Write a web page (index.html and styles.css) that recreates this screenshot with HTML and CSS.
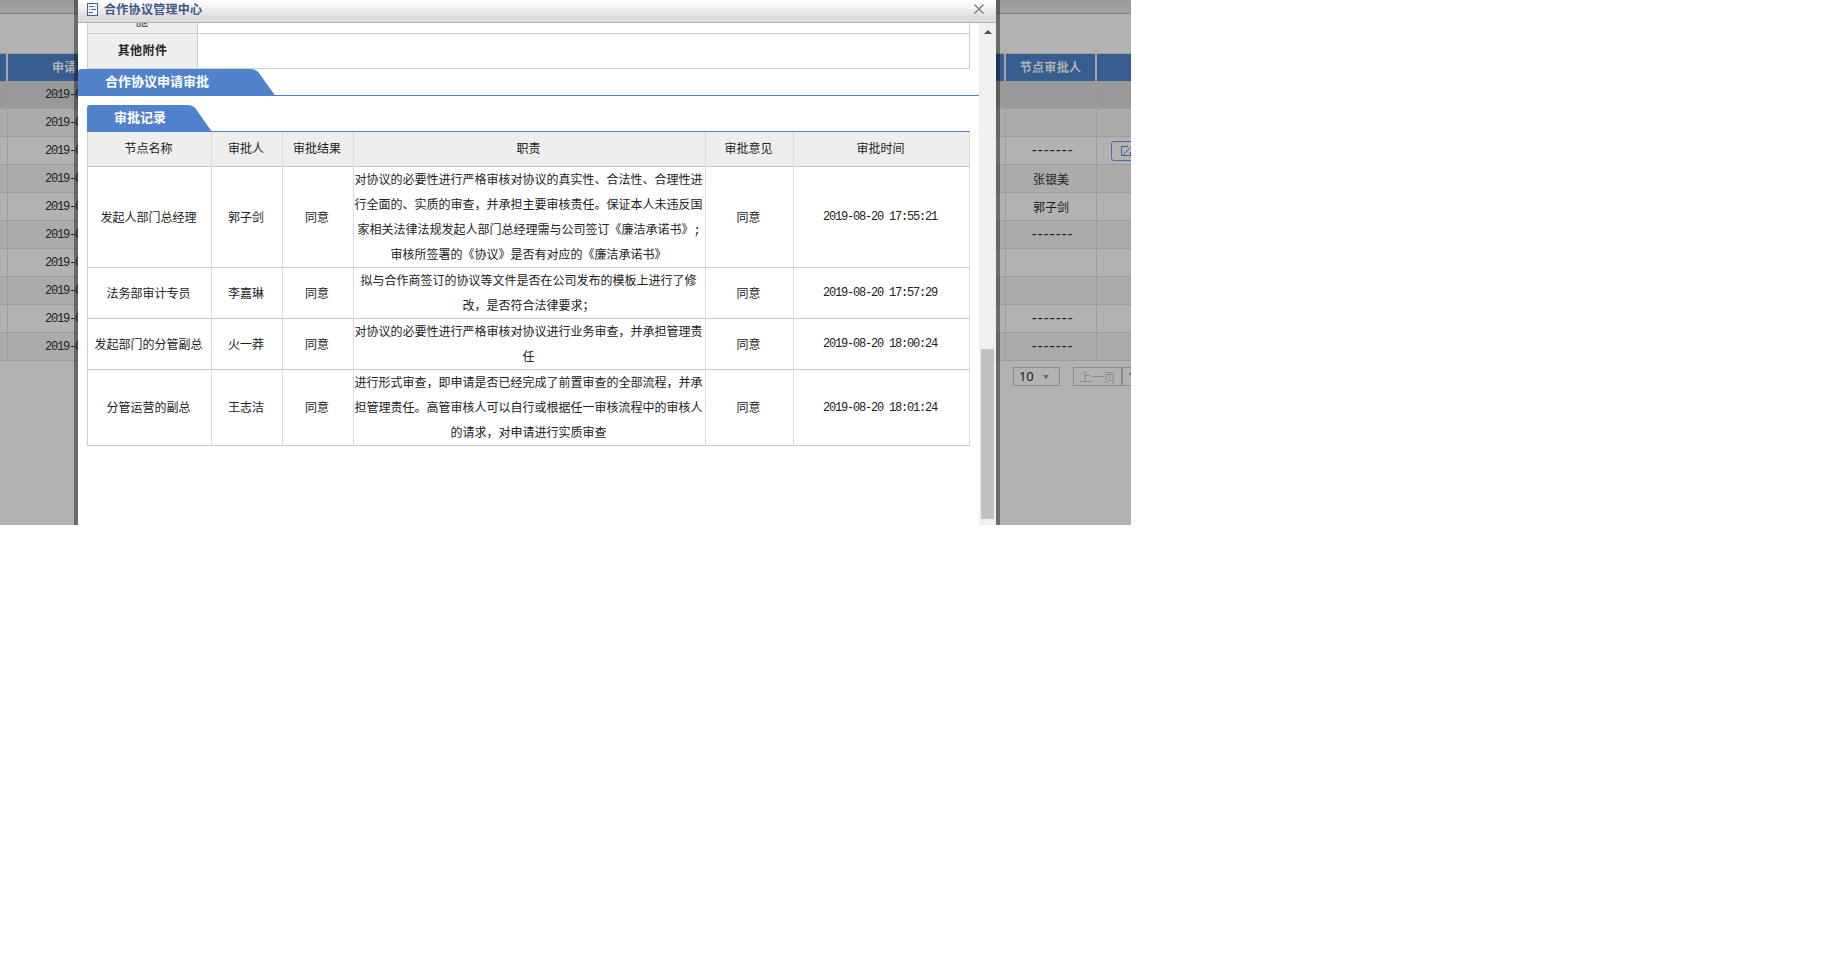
FILE: index.html
```
<!DOCTYPE html>
<html lang="zh-CN">
<head>
<meta charset="utf-8">
<title>合作协议管理中心</title>
<link rel="stylesheet" href="styles.css">
</head>
<body>
<div class="screen">
  <div class="backdrop">
    <div class="back-bar"></div>
    <div class="back-space"></div>
    <table class="grid">
      <colgroup><col class="g0"><col class="g1"><col class="g2"><col class="g3"><col class="g4"></colgroup>
      <tr><th></th><th class="date">申请</th><th></th><th>节点审批人</th><th></th></tr>
      <tr class="sel"><td></td><td class="date mono">2019-0</td><td></td><td></td><td></td></tr>
      <tr class="alt"><td></td><td class="date mono">2019-0</td><td></td><td></td><td></td></tr>
      <tr><td></td><td class="date mono">2019-0</td><td></td><td class="mono dash">-------</td><td class="act"><span class="edit"><svg width="12" height="11" viewBox="0 0 12 11"><path d="M7 .5H.5v9h9V6M2 9 10.500 .500" fill="none" stroke="#3b5f9f"/></svg></span></td></tr>
      <tr class="alt"><td></td><td class="date mono">2019-0</td><td></td><td>张银美</td><td></td></tr>
      <tr><td></td><td class="date mono">2019-0</td><td></td><td>郭子剑</td><td></td></tr>
      <tr class="alt"><td></td><td class="date mono">2019-0</td><td></td><td class="mono dash">-------</td><td></td></tr>
      <tr><td></td><td class="date mono">2019-0</td><td></td><td></td><td></td></tr>
      <tr class="alt"><td></td><td class="date mono">2019-0</td><td></td><td></td><td></td></tr>
      <tr><td></td><td class="date mono">2019-0</td><td></td><td class="mono dash">-------</td><td></td></tr>
      <tr class="alt"><td></td><td class="date mono">2019-0</td><td></td><td class="mono dash">-------</td><td></td></tr>
    </table>
    <div class="pager">
      <span class="size">10<i class="caret"></i></span>
      <span class="prev">上一页</span>
      <span class="page">1</span>
    </div>
  </div>
  <div class="modal">
    <div class="title">
      <svg class="doc" width="11" height="13" viewBox="0 0 11 13"><rect x=".5" y=".5" width="10" height="12" fill="#f4f6fa" stroke="#47618d"/><path d="M2 3.500h4M5 6.500h4M2 9.500h4" stroke="#47618d" fill="none"/><path d="M6 3.500h3M2 6.500h3" stroke="#a9b6cd" fill="none"/></svg>
      <span class="title-text">合作协议管理中心</span>
      <svg class="close" width="10" height="10" viewBox="0 0 10 10"><path d="M.5.500 9.500 9.500M9.500.500.500 9.500" stroke="#777" fill="none" stroke-width="1.200"/></svg>
    </div>
    <div class="body">
      <div class="content">
        <div class="attach">
          <div class="label clip"><span>施</span></div><div class="value"></div>
          <div class="label">其他附件</div><div class="value"></div>
        </div>
        <div class="tab tab-main"><svg width="198" height="27" viewBox="0 0 198 27"><path d="M0 27V3Q0 0 3 0H172Q178 0 181 4L197.500 27Z" fill="#5083cb"/></svg><span>合作协议申请审批</span></div>
        <div class="tab tab-sub"><svg width="125" height="27" viewBox="0 0 125 27"><path d="M0 27V3Q0 0 3 0H100Q106 0 109 4L125 27Z" fill="#5083cb"/></svg><span>审批记录</span></div>
        <table class="records">
          <colgroup><col class="c1"><col class="c2"><col class="c3"><col class="c4"><col class="c5"><col class="c6"></colgroup>
          <tr><th>节点名称</th><th>审批人</th><th>审批结果</th><th>职责</th><th>审批意见</th><th>审批时间</th></tr>
          <tr><td>发起人部门总经理</td><td>郭子剑</td><td>同意</td><td class="duty"><div>对协议的必要性进行严格审核对协议的真实性、合法性、合理性进<br>行全面的、实质的审查，并承担主要审核责任。保证本人未违反国<br>家相关法律法规发起人部门总经理需与公司签订《廉洁承诺书》<span class="mono semi">;</span><br>审核所签署的《协议》是否有对应的《廉洁承诺书》</div></td><td>同意</td><td class="mono">2019-08-20 17:55:21</td></tr>
          <tr><td>法务部审计专员</td><td>李嘉琳</td><td>同意</td><td class="duty"><div>拟与合作商签订的协议等文件是否在公司发布的模板上进行了修<br>改，是否符合法律要求；</div></td><td>同意</td><td class="mono">2019-08-20 17:57:29</td></tr>
          <tr><td>发起部门的分管副总</td><td>火一莽</td><td>同意</td><td class="duty"><div>对协议的必要性进行严格审核对协议进行业务审查，并承担管理责<br>任</div></td><td>同意</td><td class="mono">2019-08-20 18:00:24</td></tr>
          <tr><td>分管运营的副总</td><td>王志洁</td><td>同意</td><td class="duty"><div>进行形式审查，即申请是否已经完成了前置审查的全部流程，并承<br>担管理责任。高管审核人可以自行或根据任一审核流程中的审核人<br>的请求，对申请进行实质审查</div></td><td>同意</td><td class="mono">2019-08-20 18:01:24</td></tr>
        </table>
      </div>
      <div class="scroll"><i class="up"></i><div class="thumb"></div></div>
    </div>
  </div>
</div>
</body>
</html>
```
FILE: styles.css
```
* { box-sizing: border-box; }
body { margin: 0; background: #fff; color: #222; font: 12px/25px "Noto Sans CJK SC", sans-serif; text-spacing-trim: space-all; }
.screen { position: relative; width: 1131px; height: 525px; overflow: hidden; background: #b2b2b2; }
.mono { font-family: "Liberation Mono", "Noto Sans CJK SC", monospace; letter-spacing: -1.2px; }
table { border-collapse: separate; border-spacing: 0; table-layout: fixed; }
th, td { padding: 0; text-align: center; white-space: nowrap; }

.backdrop { width: 1131px; height: 525px; overflow: hidden; }
.back-bar { height: 14px; background: linear-gradient(#9a9a9a, #a2a2a2); border-bottom: 1px solid #7f7f7f; }
.back-space { height: 39px; }
.grid { width: 1189px; border-top: 1px solid #9c9c9c; }
.grid th { height: 27px; background: #375c8f; color: #b2b2b2; font-weight: bold; line-height: 25px; padding-bottom: 2px; border-right: 2px solid #a6a6a6; letter-spacing: .3px; }
.grid td { height: 28px; line-height: 27px; border-right: 1px solid #9c9c9c; border-bottom: 1px solid #9c9c9c; overflow: hidden; }
.g0 { width: 8px; } .g1 { width: 138px; } .g2 { width: 860px; } .g3 { width: 91px; } .g4 { width: 92px; }
.grid .date { text-align: left; padding-left: 37px; }
.grid th.date { padding-left: 44px; }
.grid td.mono { line-height: 25px; padding-top: 2px; }
.grid td.dash { font-size: 14px; letter-spacing: -2.4px; }
.grid .sel td { background: #999; }
.grid .alt td { background: #ababab; }
.grid td.act { text-align: left; padding-left: 14px; line-height: 0; }
.edit { display: inline-flex; width: 60px; height: 20px; border: 1px solid #4b6ca6; border-radius: 3px; padding: 4px 9px; }
.pager { display: flex; height: 19px; margin: 6px 0 0 1013px; line-height: 17px; }
.pager span { border: 1px solid #8c8c8c; flex: none; }
.pager .size, .pager .page { font: 13px/17px "Noto Sans", sans-serif; }
.size { width: 47px; margin-right: 13px; padding-left: 5px; display: flex; align-items: center; gap: 10px; letter-spacing: -.3px; }
.caret { border: 3px solid transparent; border-top: 4px solid #4f7090; border-bottom: 0; }
.prev { width: 49px; color: #8a8a8a; text-align: center; }
.page { width: 30px; padding-left: 5px; }

.modal { position: absolute; left: 74px; top: 0; width: 926px; height: 525px; border: solid rgba(0, 0, 0, .4); border-width: 0 4px; background: #fff; background-clip: padding-box; display: flex; flex-direction: column; }
.title { height: 23px; flex: none; display: flex; padding: 0 12px 0 9px; background: linear-gradient(#fff, #f3f3f3 30%, #dcdcdc 80%, #dedede); border-bottom: 1px solid #b0b0b0; }
.doc { margin-top: 3px; flex: none; }
.title-text { margin-left: 6px; flex: 1; color: #3f5787; font-weight: bold; line-height: 17px; letter-spacing: .3px; }
.close { margin-top: 4px; flex: none; }
.body { display: flex; height: 502px; }
.content { width: 901px; flex: none; }
.attach { display: grid; grid-template-columns: 111px 772px; grid-template-rows: 11px 35px; margin-left: 9px; width: 883px; }
.label { background: #eee; border: solid #ccc; border-width: 0 1px 1px; font-weight: bold; line-height: 31px; text-align: center; overflow: hidden; letter-spacing: .4px; }
.clip span { display: block; margin-top: -19px; line-height: 33px; font-weight: normal; margin-left: -1px; }
.value { border: solid #ccc; border-width: 0 1px 1px 0; }
.tab { display: flex; height: 27px; border-bottom: 1px solid #5680c2; color: #fff; font-weight: bold; font-size: 13px; line-height: 23px; }
.tab svg { flex: none; margin-bottom: -1px; }
.tab span { flex: none; }
.tab-main span { margin-left: -171px; }
.tab-sub { margin: 9px 0 0 9px; width: 883px; }
.tab-sub span { margin-left: -98px; }
.records { width: 883px; margin-left: 9px; border-left: 1px solid #ccc; }
.c1 { width: 124px; } .c2, .c3 { width: 71px; } .c4 { width: 352px; } .c5 { width: 88px; } .c6 { width: 176px; }
.records th { height: 35px; background: #eee; font-weight: normal; line-height: 32px; padding: 0 2px 2px 0; }
.records th, .records td { border-right: 1px solid #dcdcdc; border-bottom: 1px solid #c8c8c8; }
.records td { padding: 0 2px 2px 0; }
.records td.mono { padding: 1px 3px 0 0; }
.records td.duty { padding: 0 2px 0 0; }
.duty div { margin: -1px 0 1px; }
.semi { line-height: 0; }
.scroll { width: 17px; background: #f0f0f0; display: flex; flex-direction: column; align-items: center; }
.up { margin-top: 7px; border: 4px solid transparent; border-bottom: 4px solid #505050; border-top: 0; }
.thumb { width: 13px; height: 170px; margin-top: 315px; background: #c1c1c1; }
```
